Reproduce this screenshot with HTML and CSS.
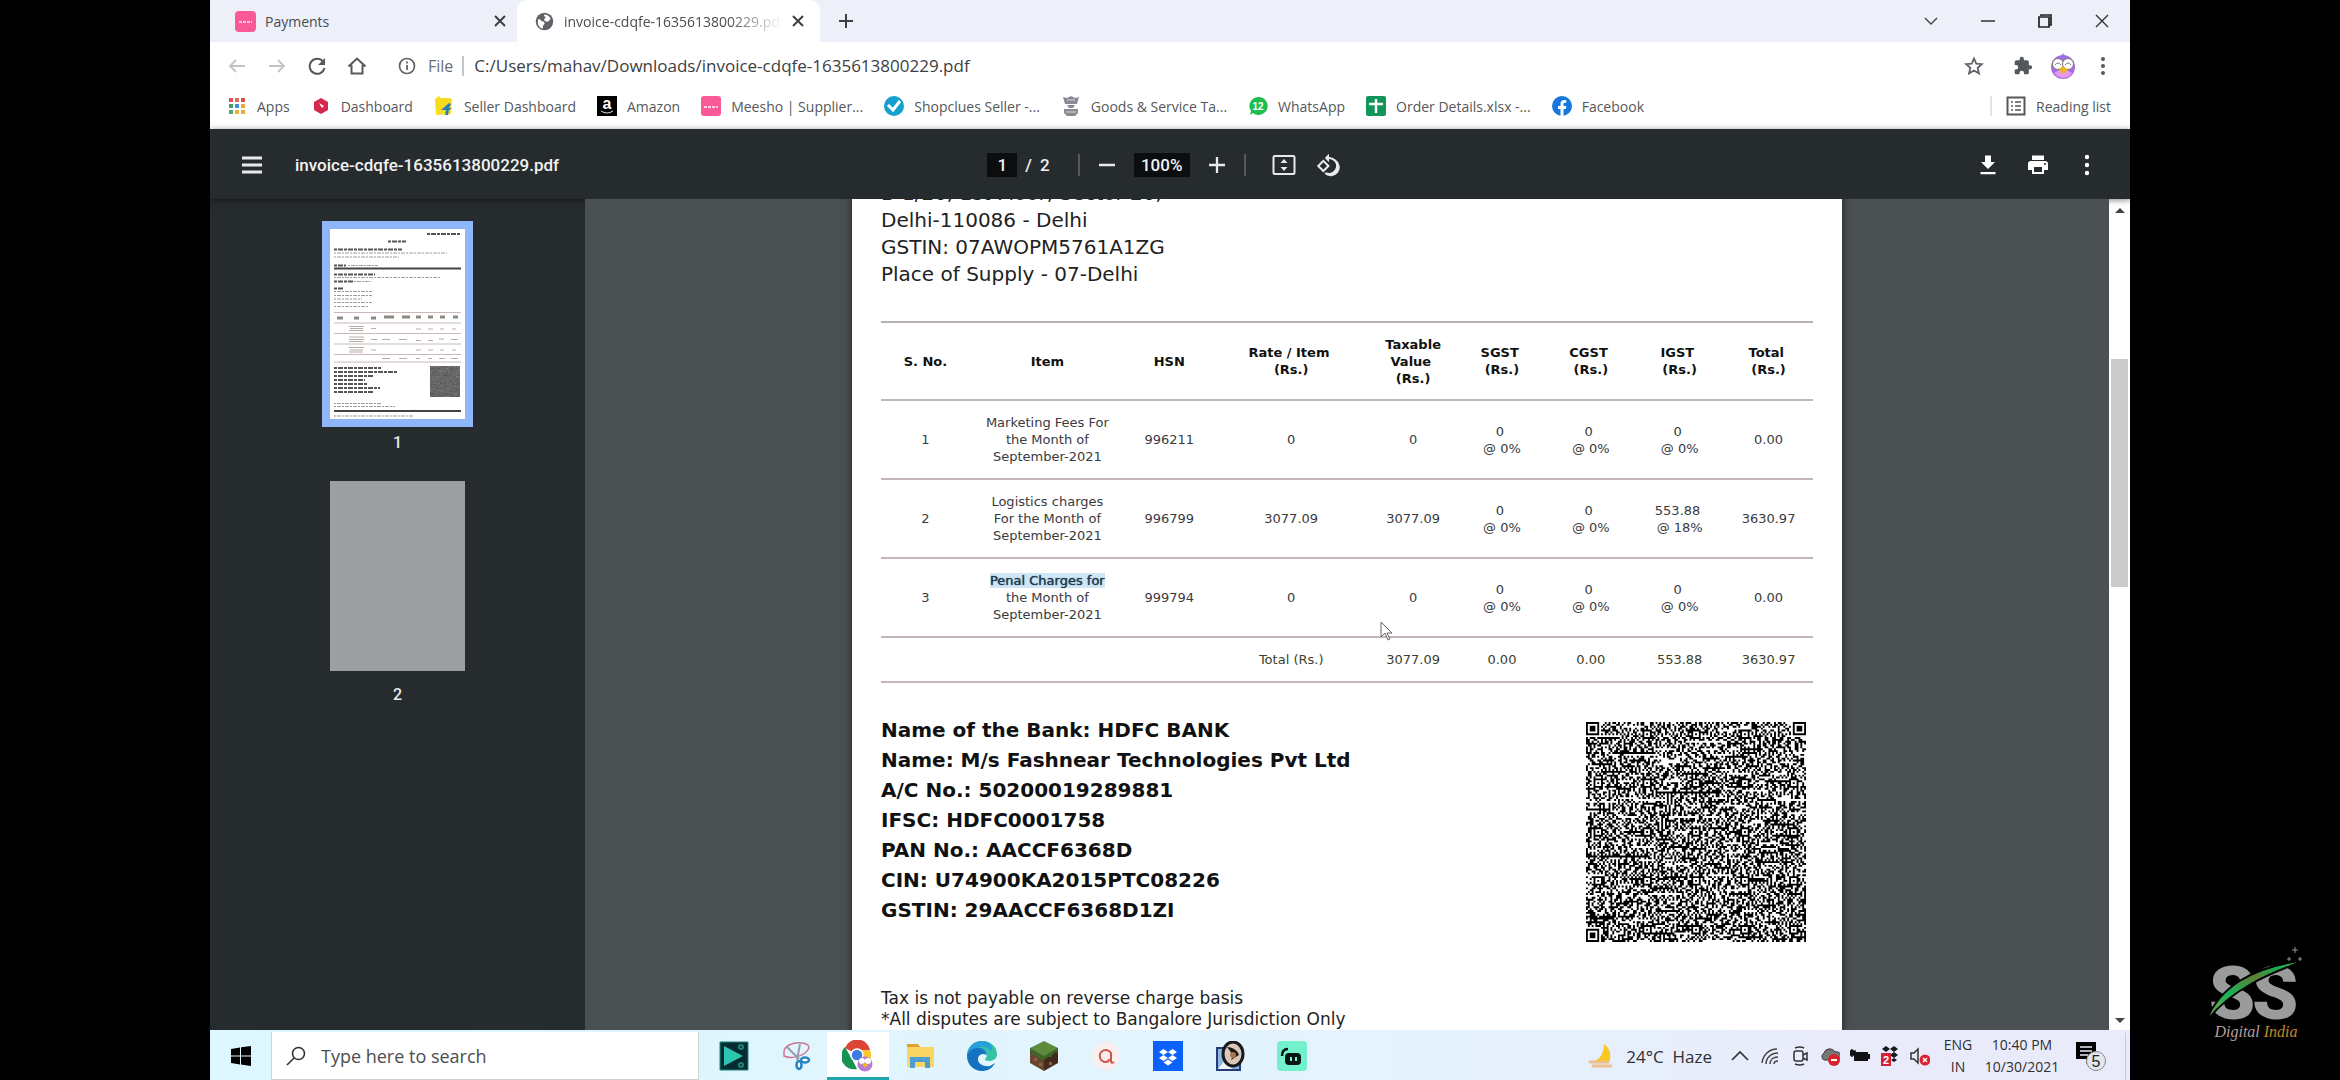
FILE: index.html
```html
<!DOCTYPE html>
<html lang="en">
<head>
<meta charset="utf-8">
<title>invoice-cdqfe-1635613800229.pdf</title>
<link rel="stylesheet" href="styles.css">
</head>
<body>
<div class="stage">
<div class="screen">

  <header class="tabstrip">
    <div class="tab">
      <svg class="i21" viewBox="0 0 21 21"><rect width="21" height="21" rx="4" fill="#f95a97"/><path d="M4 11h13" stroke="#ffc4dc" stroke-width="2" stroke-dasharray="3 1"/></svg>
      <a class="tab-title" href="#">Payments</a>
      <button class="plain" aria-label="Close tab"><svg class="i12" viewBox="0 0 12 12"><path d="M1 1l10 10M11 1L1 11" stroke="#3c4043" stroke-width="2"/></svg></button>
    </div>
    <div class="tab active">
      <svg class="i21" viewBox="0 0 24 24"><circle cx="12" cy="12" r="10" fill="#5f6368"/><path d="M5 9c3 0 3 3 5 3s3 2 1 4 0 3-1 4C6 19 3 15 5 9zM12 4c3 0 6 2 7 5-2 1-2 4-5 3s-3-3-1-4-3-2-1-4z" fill="#fff"/></svg>
      <a class="tab-title fade" href="#">invoice-cdqfe-1635613800229.pdf</a>
      <button class="plain" aria-label="Close tab"><svg class="i12" viewBox="0 0 12 12"><path d="M1 1l10 10M11 1L1 11" stroke="#3c4043" stroke-width="2"/></svg></button>
    </div>
    <button class="plain newtab" aria-label="New tab"><svg class="i16" viewBox="0 0 16 16"><path d="M8 1v14M1 8h14" stroke="#3c4043" stroke-width="2"/></svg></button>
    <div class="winctl">
      <button class="plain" aria-label="Search tabs"><svg class="i16" viewBox="0 0 16 16"><path d="M2 5l6 6 6-6" fill="none" stroke="#444" stroke-width="1.4"/></svg></button>
      <button class="plain" aria-label="Minimize"><svg class="i16" viewBox="0 0 16 16"><path d="M1 8h14" stroke="#333" stroke-width="1.5"/></svg></button>
      <button class="plain" aria-label="Restore"><svg class="i16" viewBox="0 0 16 16"><path d="M2 4h10v10H2zM4 3V2h10v10h-2" fill="none" stroke="#222" stroke-width="1.7"/></svg></button>
      <button class="plain" aria-label="Close"><svg class="i16" viewBox="0 0 16 16"><path d="M2 2l12 12M14 2L2 14" stroke="#333" stroke-width="1.4"/></svg></button>
    </div>
  </header>

  <nav class="navbar">
    <button class="plain" aria-label="Back"><svg class="i20" viewBox="0 0 20 20"><path d="M18 10H3M9 4l-6 6 6 6" fill="none" stroke="#c0c3c7" stroke-width="1.8"/></svg></button>
    <button class="plain" aria-label="Forward"><svg class="i20" viewBox="0 0 20 20"><path d="M2 10h15M11 4l6 6-6 6" fill="none" stroke="#c0c3c7" stroke-width="1.8"/></svg></button>
    <button class="plain" aria-label="Reload"><svg class="i20" viewBox="0 0 20 20"><path d="M16 5.500A7.500 7.500 0 1 0 17.500 12" fill="none" stroke="#555a5e" stroke-width="2"/><path d="M18 2v7h-7z" fill="#555a5e"/></svg></button>
    <button class="plain" aria-label="Home"><svg class="i20" viewBox="0 0 20 20"><path d="M1.500 10.500L10 2.500l8.500 8M4.500 9v8.500h11V9" fill="none" stroke="#555a5e" stroke-width="2"/></svg></button>
    <div class="omnibox">
      <svg class="i18" viewBox="0 0 18 18"><circle cx="9" cy="9" r="7.500" fill="none" stroke="#5f6368" stroke-width="1.700"/><path d="M9 8v5M9 4.500v2" stroke="#5f6368" stroke-width="1.800"/></svg>
      <label for="url">File</label>
      <input id="url" type="text" value="C:/Users/mahav/Downloads/invoice-cdqfe-1635613800229.pdf">
      <button class="plain" aria-label="Bookmark this page"><svg class="i20" viewBox="0 0 24 24"><path d="M12 3l2.700 6.200 6.800.6-5.100 4.500 1.500 6.600L12 17.400 6.100 20.900l1.500-6.600L2.500 9.800l6.800-.6z" fill="none" stroke="#5f6368" stroke-width="2.200"/></svg></button>
    </div>
    <div class="nav-right">
      <button class="plain" aria-label="Extensions"><svg class="i20" viewBox="0 0 24 24"><path d="M20.500 11H19V7a2 2 0 0 0-2-2h-4V3.500a2.500 2.500 0 0 0-5 0V5H4a2 2 0 0 0-2 2v3.800h1.500a2.700 2.700 0 0 1 0 5.400H2V20a2 2 0 0 0 2 2h3.800v-1.500a2.700 2.700 0 0 1 5.400 0V22H17a2 2 0 0 0 2-2v-4h1.500a2.500 2.500 0 0 0 0-5z" fill="#54585c"/></svg></button>
      <button class="plain" aria-label="Profile"><svg class="i26" viewBox="0 0 26 26"><path d="M10 4l3-4 3 4z" fill="#b79ac9"/><circle cx="13" cy="14" r="12" fill="#a56ce0"/><path d="M4 20c4 6 14 7 18 0l-9-5z" fill="#e59af0"/><circle cx="8" cy="11" r="5.500" fill="#fff" stroke="#777"/><circle cx="18" cy="11" r="5.500" fill="#fff" stroke="#777"/><path d="M5 12q3-4 6 0M15 12q3-4 6 0" fill="none" stroke="#777"/><path d="M9 16l4-3 5 4-5 4z" fill="#f1b51c"/></svg></button>
      <button class="plain" aria-label="Menu"><svg class="i20" viewBox="0 0 20 20" fill="#555a5e"><circle cx="10" cy="3" r="2"/><circle cx="10" cy="10" r="2"/><circle cx="10" cy="17" r="2"/></svg></button>
    </div>
  </nav>

  <nav class="bookmarks">
    <a href="#"><svg class="i20" viewBox="0 0 20 20"><g><path d="M2 2h4v4H2z" fill="#d9534f"/><path d="M8 2h4v4H8z" fill="#dd6f5a"/><path d="M14 2h4v4h-4z" fill="#d94f43"/><path d="M2 8h4v4H2z" fill="#43a35e"/><path d="M8 8h4v4H8z" fill="#3f8fe0"/><path d="M14 8h4v4h-4z" fill="#e7a73a"/><path d="M2 14h4v4H2z" fill="#55a867"/><path d="M8 14h4v4H8z" fill="#e7b23a"/><path d="M14 14h4v4h-4z" fill="#eea93c"/></g></svg>Apps</a>
    <a href="#"><svg class="i20" viewBox="0 0 20 20"><path d="M10 2l7 4v8l-7 4-7-4V6z" fill="#d5274b"/><path d="M8 7l5 3-2 2z" fill="#fff"/></svg>Dashboard</a>
    <a href="#"><svg class="i20" viewBox="0 0 20 20"><path d="M1 3l4-3 2 2h8l3 1-1 15-15 1z" fill="#f7dc1f"/><path d="M11 19l1-5H7l8-7 2 1-2 4h3l-3 2-1 5z" fill="#2c7cb8"/></svg>Seller Dashboard</a>
    <a href="#"><svg class="i20" viewBox="0 0 20 20"><path d="M0 0h20v20H0z" fill="#000"/><text x="10" y="13" text-anchor="middle" class="glyph" font-size="16" fill="#fff">a</text><path d="M4 15q6 4 12 0" fill="none" stroke="#ddd"/></svg>Amazon</a>
    <a href="#"><svg class="i20" viewBox="0 0 20 20"><rect width="20" height="20" rx="3" fill="#f95a97"/><path d="M3 11h14" stroke="#ffd0e2" stroke-width="2" stroke-dasharray="3 1"/></svg>Meesho | Supplier...</a>
    <a href="#"><svg class="i20" viewBox="0 0 20 20"><circle cx="10" cy="10" r="10" fill="#16a0cf"/><path d="M4 9l5 5 7-9" fill="none" stroke="#fff" stroke-width="3"/></svg>Shopclues Seller -...</a>
    <a href="#"><svg class="i20" viewBox="0 0 20 20" fill="#8d8892"><path d="M2 1l4 1 4-2 4 2 4-1-2 7H4zM6 9h8l-2 3H8zM3 13h14v4l-3 3H6l-3-3z"/><path d="M6 4h8M5 16h10" stroke="#d8d4dc"/></svg>Goods &amp; Service Ta...</a>
    <a href="#"><svg class="i20" viewBox="0 0 20 20"><path d="M10 1a9 9 0 1 1-5 16l-3 2 1-4A9 9 0 0 1 10 1z" fill="#1fbd4e"/><text x="10" y="14" text-anchor="middle" class="glyph" font-size="10" fill="#fff">12</text></svg>WhatsApp</a>
    <a href="#"><svg class="i20" viewBox="0 0 20 20"><rect width="20" height="20" rx="2" fill="#12955a"/><path d="M10 3v14M3 8h14" stroke="#fff" stroke-width="2.400"/></svg>Order Details.xlsx -...</a>
    <a href="#"><svg class="i20" viewBox="0 0 20 20"><circle cx="10" cy="10" r="10" fill="#1877dc"/><path d="M8.500 20v-7H6v-3h2.500V8c0-2.600 1.500-4 3.800-4l2 .2v2.500h-1.200C12 6.700 11.500 7.400 11.500 8v2h2.800l-.5 3h-2.300v7z" fill="#fff"/></svg>Facebook</a>
    <a href="#" class="reading"><svg class="i20" viewBox="0 0 20 20"><path d="M1.500 1.500h17v17h-17z" fill="none" stroke="#54585c" stroke-width="2"/><path d="M5 6h2M9 6h6M5 10h2M9 10h6M5 14h2M9 14h6" stroke="#54585c" stroke-width="1.600"/></svg>Reading list</a>
  </nav>

  <div class="pdfbar">
    <div class="pdf-left">
      <button class="plain" aria-label="Toggle sidebar"><svg class="i22" viewBox="0 0 22 22"><path d="M1 4h20M1 11h20M1 18h20" stroke="#e8eaed" stroke-width="3"/></svg></button>
      <span class="pdf-title">invoice-cdqfe-1635613800229.pdf</span>
    </div>
    <div class="pdf-mid">
      <span class="pager"><input class="field pageno" type="text" value="1" aria-label="Page"><span>/</span><span>2</span></span>
      <i class="sep"></i>
      <button class="plain" aria-label="Zoom out"><svg class="i22" viewBox="0 0 22 22"><path d="M3 11h16" stroke="#e8eaed" stroke-width="2.500"/></svg></button>
      <input class="field zoom" type="text" value="100%" aria-label="Zoom level">
      <button class="plain" aria-label="Zoom in"><svg class="i22" viewBox="0 0 22 22"><path d="M3 11h16M11 3v16" stroke="#e8eaed" stroke-width="2.300"/></svg></button>
      <i class="sep"></i>
      <div class="fit">
        <button class="plain" aria-label="Fit to page"><svg class="i24" viewBox="0 0 24 24"><rect x="1.500" y="3" width="21" height="18" rx="1.500" fill="none" stroke="#e8eaed" stroke-width="2"/><path d="M12 6l3.500 4h-7zM12 18l-3.500-4h7z" fill="#e8eaed"/></svg></button>
        <button class="plain" aria-label="Rotate"><svg class="i24" viewBox="0 0 24 24"><path d="M7.300 6.400L.9 12.900l6.500 6.500 6.500-6.500zM3.700 12.900l3.700-3.700 3.600 3.700-3.600 3.700zM19.400 6.600A9 9 0 0 0 13 4V.8L8.800 5 13 9.200V6a7 7 0 1 1-3 13.300L8.500 20.800A9 9 0 1 0 19.400 6.600z" fill="#e8eaed"/></svg></button>
      </div>
    </div>
    <div class="pdf-right">
      <button class="plain" aria-label="Download"><svg class="i24" viewBox="0 0 24 24"><path d="M19 9h-4V2.500H9V9H5l7 7zM4.500 19v2.300h15V19z" fill="#fff"/></svg></button>
      <button class="plain" aria-label="Print"><svg class="i24" viewBox="0 0 24 24"><path d="M19 8H5a3 3 0 0 0-3 3v6h4v4h12v-4h4v-6a3 3 0 0 0-3-3zm-3 11H8v-5h8zm3-7a1 1 0 1 1 0-2 1 1 0 0 1 0 2zM18 2.500H6V7h12z" fill="#fff"/></svg></button>
      <button class="plain" aria-label="More"><svg class="i22" viewBox="0 0 22 22" fill="#fff"><circle cx="11" cy="3" r="2.200"/><circle cx="11" cy="11" r="2.200"/><circle cx="11" cy="19" r="2.200"/></svg></button>
    </div>
  </div>

  <div class="viewer">
    <aside class="thumbs">
      <button class="thumb current" aria-label="Page 1">
        <svg class="mini" viewBox="0 0 135 190">
          <path d="M0 0h135v190H0z" fill="#fff"/>
          <g stroke="#555" stroke-width="2" stroke-dasharray="3 1 5 1"><path d="M97 5h34M58 12.500h18M4 20.500h68M4 36.500h12M4 45.500h41M4 52.500h20M4 59.500h9M4 139h47M4 143h63M4 147h39M4 151h31M4 155h34M4 159h46M4 163h40"/></g>
          <g stroke="#9a9a9a" stroke-width="1" stroke-dasharray="2 1 4 1"><path d="M4 24h113M4 28h65M18 36.500h30M4 48.500h106M24 52.500h17M4 62.500h38M4 66.500h38M4 70h28M4 73.500h38M4 77.500h35M4 174.500h48M4 177.500h61M4 187h80"/></g>
          <path d="M4 39.500h127M4 182h127" stroke="#444" stroke-width="2"/>
          <path d="M4 83.500h127M4 94h127M4 104.500h127M4 115h127M4 125.500h127M4 133h127" stroke="#c9bab7"/>
          <path d="M7 89h6M24 89h5M41 89h5M54 88h10M72 88h8M86 88h5M98 88h5M110 88h5M123 88h5" stroke="#8a8a85" stroke-width="3"/>
          <g stroke="#b9aca8" stroke-width="1"><path d="M19 97.500h15M20 99.500h13M19 101.500h14M19 108h15M19 110.500h15M19 112.500h14M19 118.500h15M20 121h13M19 123h14M41 99.500h5M41 110.500h6M41 121h5M52 110.500h8M69 110.500h8M86 100h5M98 100h5M110 100h4M122 100h4M86 111.500h5M98 111.500h5M109 110h5M121 110.500h7M86 121h5M98 121h5M110 121h4M122 121h4M52 129.500h8M69 129.500h8M86 129.500h4M98 129.500h4M109 129.500h6M121 129.500h7"/></g>
          <svg x="100" y="137" width="30" height="31" viewBox="0 0 117 117" preserveAspectRatio="none"><path d="M0 0h117v117H0z" fill="#8a8a8a"/><use href="#qr-modules" fill="#444"/></svg>
        </svg>
      </button>
      <span class="thumb-no">1</span>
      <button class="thumb" aria-label="Page 2"><span class="mini blank"></span></button>
      <span class="thumb-no">2</span>
    </aside>

    <main class="canvas">
      <article class="page">
        <address class="billto">B-1/20, 1st Floor, Sector 20,<br>Delhi-110086 - Delhi<br>GSTIN: 07AWOPM5761A1ZG<br>Place of Supply - 07-Delhi</address>
        <table class="items">
          <colgroup><col class="n"><col class="w"><col class="n"><col class="w"><col class="n"><col class="n"><col class="n"><col class="n"><col class="n"></colgroup>
          <thead><tr><th>S. No.</th><th>Item</th><th>HSN</th><th>Rate / Item&nbsp;<br>(Rs.)</th><th>Taxable<br>Value&nbsp;<br>(Rs.)</th><th>SGST&nbsp;<br>(Rs.)</th><th>CGST&nbsp;<br>(Rs.)</th><th>IGST&nbsp;<br>(Rs.)</th><th>Total&nbsp;<br>(Rs.)</th></tr></thead>
          <tbody>
            <tr><td>1</td><td>Marketing Fees For<br>the Month of<br>September-2021</td><td>996211</td><td>0</td><td>0</td><td>0&nbsp;<br>@ 0%</td><td>0&nbsp;<br>@ 0%</td><td>0&nbsp;<br>@ 0%</td><td>0.00</td></tr>
            <tr><td>2</td><td>Logistics charges<br>For the Month of<br>September-2021</td><td>996799</td><td>3077.09</td><td>3077.09</td><td>0&nbsp;<br>@ 0%</td><td>0&nbsp;<br>@ 0%</td><td>553.88&nbsp;<br>@ 18%</td><td>3630.97</td></tr>
            <tr><td>3</td><td><mark>Penal Charges for</mark><br>the Month of<br>September-2021</td><td>999794</td><td>0</td><td>0</td><td>0&nbsp;<br>@ 0%</td><td>0&nbsp;<br>@ 0%</td><td>0&nbsp;<br>@ 0%</td><td>0.00</td></tr>
          </tbody>
          <tfoot><tr><td></td><td></td><td></td><td>Total (Rs.)</td><td>3077.09</td><td>0.00</td><td>0.00</td><td>553.88</td><td>3630.97</td></tr></tfoot>
        </table>
        <div class="bankrow">
          <div class="bank">Name of the Bank: HDFC BANK<br>Name: M/s Fashnear Technologies Pvt Ltd<br>A/C No.: 50200019289881<br>IFSC: HDFC0001758<br>PAN No.: AACCF6368D<br>CIN: U74900KA2015PTC08226<br>GSTIN: 29AACCF6368D1ZI</div>
          <svg class="qr" viewBox="0 0 117 117" role="img" aria-label="Signed invoice QR code"><path id="qr-modules" d=""/></svg>
        </div>
        <p class="terms">Tax is not payable on reverse charge basis<br>*All disputes are subject to Bangalore Jurisdiction Only</p>
      </article>
      <svg class="cursor" viewBox="0 0 13 20"><path d="M1 1v15l4-4 3 7 2-1-3-6h5z" fill="#fff" stroke="#666"/></svg>
    </main>
    <div class="scrollbar"><i class="up"></i><i class="bar"></i><i class="down"></i></div>
  </div>

  <footer class="taskbar">
    <button class="plain start" aria-label="Start"><svg class="i20" viewBox="0 0 20 20"><path d="M0 3l9-1.500V9.500H0zM10 1.300L20 0v9.500H10zM0 10.500h9v8L0 17zM10 10.500h10V20l-10-1.400z" fill="#000"/></svg></button>
    <div class="search"><svg class="i20" viewBox="0 0 20 20"><circle cx="12.500" cy="7.500" r="6" fill="none" stroke="#333" stroke-width="1.600"/><path d="M8 12l-7 7" stroke="#333" stroke-width="1.600"/></svg><input type="text" aria-label="Search" placeholder="Type here to search"></div>
    <div class="apps">
      <button class="app" aria-label="Filmora"><svg class="i30" viewBox="0 0 30 30"><path d="M1 1h28v28H1z" fill="#062b30" stroke="#15897f"/><path d="M5 5l19 10L5 25z" fill="#2bc5b0"/><g fill="none" stroke="#15897f" stroke-width="2"><circle cx="22" cy="6" r="2"/><circle cx="22" cy="24" r="2"/></g></svg></button>
      <button class="app" aria-label="Snip"><svg class="i30" viewBox="0 0 30 30"><g fill="none" stroke-width="1.500"><path d="M3 12C2 5 12 1 21 2s8 6 3 10-15 6-21 3z" stroke="#c97993"/><path d="M6 6l12 12M19 3l-3 16" stroke="#9a9cab" stroke-width="2"/></g><g fill="#fff" stroke="#2584c6" stroke-width="2.500"><ellipse cx="18" cy="24" rx="2.500" ry="4"/><ellipse cx="24" cy="19" rx="4" ry="2.500"/></g></svg></button>
      <button class="app open" aria-label="Chrome"><svg class="i32" viewBox="0 0 32 32"><path d="M15 14L3 8a13 13 0 0 1 25 2z" fill="#dc4437"/><path d="M3 7l8 14 4 8A13 13 0 0 1 3 7z" fill="#18934f"/><path d="M15 10h13a13 13 0 0 1-9 18l-4-1 5-12z" fill="#fbc62e"/><circle cx="15" cy="15" r="6" fill="#3b7de0" stroke="#fff" stroke-width="1.500"/><circle cx="23" cy="24" r="7.500" fill="#b57bd6"/><circle cx="20" cy="21" r="3" fill="#fff"/><circle cx="26" cy="21" r="3" fill="#fff"/><path d="M20 24l3-1 3 2-3 3z" fill="#f1b51c"/></svg></button>
      <button class="app" aria-label="File Explorer"><svg class="i30" viewBox="0 0 30 30"><path d="M2 3h11l3 4H2z" fill="#e0a12b"/><path d="M2 6h27v20H2z" fill="#fbd562"/><path d="M5 27V16h20v11h-5v-6h-10v6z" fill="#4e9ed3"/></svg></button>
      <button class="app" aria-label="Edge"><svg class="i30" viewBox="0 0 30 30"><path d="M15 0c9 0 15 6 15 13 0 5-4 7-8 7-3 0-4-1-4-2l2-3c0-4-4-7-9-6-6 0-10 4-11 6C0 6 7 0 15 0z" fill="#34c3a4"/><path d="M15 0C7 0 0 6 0 15l9-3c4-3 11-2 11 3 0-6-3-9-9-8 4-3 10-1 13 3C27 5 22 0 15 0z" fill="#279fd8"/><path d="M0 15c1-5 6-8 11-8 4 0 8 3 9 8-1-3-8-3-9 2-1 6 6 9 12 8l5-3c-3 6-8 8-13 8C6 30 0 23 0 15z" fill="#1571c2"/></svg></button>
      <button class="app" aria-label="Minecraft"><svg class="i30" viewBox="0 0 30 30"><path d="M15 0l14 7-14 8L1 7z" fill="#5d8a3b"/><path d="M1 7l14 8v15L1 22z" fill="#6a452f"/><path d="M29 7l-14 8v15l14-8z" fill="#46291d"/><path d="M1 7l14 8v4l-4-1-3-3-4-1-3-4zM29 7l-14 8v4l4-3 3 0 3-4 4-1z" fill="#3d6727"/><path d="M5 17h3v3H5zM10 22h3v3h-3zM20 21h3v3h-3z" fill="#8a6247"/></svg></button>
      <button class="app" aria-label="Recorder"><svg class="i30" viewBox="0 0 30 30"><circle cx="15" cy="15" r="14" fill="#fbeeee"/><path d="M20 21V12a6 6 0 1 0-5 9c2 0 3-1 3-3" fill="none" stroke="#d0564a" stroke-width="2"/><path d="M20 20q0 3 3 1" fill="none" stroke="#d0564a" stroke-width="2"/></svg></button>
      <button class="app" aria-label="Dropbox"><svg class="i30" viewBox="0 0 30 30"><path d="M0 0h30v30H0z" fill="#0a62fb"/><path d="M10.500 8l4.500 3-4.500 3L6 11zM19.500 8l4.500 3-4.500 3-4.500-3zM10.500 14l4.500 3-4.500 3L6 17zM19.500 14l4.500 3-4.500 3-4.500-3zM15 18.500l4.500 3-4.500 3-4.500-3z" fill="#fff"/></svg></button>
      <button class="app" aria-label="Viewer"><svg class="i30" viewBox="0 0 30 30"><path d="M2 7h23v22H2z" fill="#8fb7e6" stroke="#253d77" stroke-width="2"/><path d="M3 28l8-10 6 10z" fill="#eef3f9"/><ellipse cx="18" cy="13" rx="10" ry="12" fill="#d9c7b8" stroke="#1a1a1c" stroke-width="3"/><path d="M12 6c6 0 11 4 12 8l-8 5c3-5-1-9-4-13z" fill="#1c1a1c"/><circle cx="18" cy="14" r="3" fill="#b0754c"/></svg></button>
      <button class="app" aria-label="Phone link"><svg class="i30" viewBox="0 0 30 30"><rect width="30" height="30" rx="4" fill="#73f0cc"/><rect x="8" y="12" width="16" height="12" rx="4" fill="#071512"/><path d="M5 15c0-5 2-7 6-7" fill="none" stroke="#071512" stroke-width="2.500"/><path d="M14 16v4M19 16v4" stroke="#73f0cc" stroke-width="2"/></svg></button>
    </div>
    <div class="weather"><svg class="i28" viewBox="0 0 28 28"><path d="M17 2c6 4 8 12 5 18H5c8-2 12-9 12-18z" fill="#f9c821"/><path d="M3 20h18M6 24h18" stroke="#ecc08a" stroke-width="3" stroke-linecap="round"/></svg><span>24°C&nbsp; Haze</span></div>
    <div class="tray">
      <button class="plain" aria-label="Show hidden icons"><svg class="i20" viewBox="0 0 20 20"><path d="M2 14l8-8 8 8" fill="none" stroke="#333" stroke-width="1.700"/></svg></button>
      <button class="plain" aria-label="Network"><svg class="i20" viewBox="0 0 20 20"><g fill="none" stroke="#444" stroke-width="1.500"><path d="M2 17C3 9 9 3 17 3M6 18c0-6 5-11 12-11M10 18c0-4 3-7 8-7M14 18c0-2 2-3 4-3"/></g></svg></button>
      <button class="plain" aria-label="Meet now"><svg class="i20" viewBox="0 0 20 20"><g fill="none" stroke="#333" stroke-width="1.500"><rect x="4" y="5" width="9" height="10" rx="2"/><path d="M13 9l4-2v7l-4-2M5 2q5-2 9 0M5 18q5 2 9 0"/></g></svg></button>
      <button class="plain" aria-label="Cloud sync"><svg class="i20" viewBox="0 0 20 20"><path d="M4 14a4 4 0 0 1 0-7 6 6 0 0 1 11-1 4 4 0 0 1 3 8z" fill="#777" stroke="#333"/><circle cx="14" cy="14" r="6" fill="#d9222e"/><path d="M11 14h6" stroke="#fff" stroke-width="2"/></svg></button>
      <button class="plain" aria-label="Battery"><svg class="i20" viewBox="0 0 20 20"><path d="M4 6h14v2h2v5h-2v2H4z" fill="#111"/><path d="M0 5h5v4H0zM2 3v8" fill="#111" stroke="#111" stroke-width="1.500"/></svg></button>
      <button class="plain" aria-label="Dropbox"><svg class="i20" viewBox="0 0 20 20"><path d="M6 0l4 3-4 3-4-3zM14 0l4 3-4 3-4-3zM14 6l4 3-4 3-4-3zM14 12l3 2-3 2-3-2z" fill="#17171f"/><path d="M1 7h10v13H1z" fill="#d3203a"/><text x="6" y="18" text-anchor="middle" class="glyph" font-size="11" fill="#fff">2</text></svg></button>
      <button class="plain" aria-label="Volume"><svg class="i20" viewBox="0 0 20 20"><path d="M1 7h3l4-4v14l-4-4H1z" fill="none" stroke="#333" stroke-width="1.500"/><circle cx="15" cy="14" r="5.500" fill="#d9222e"/><path d="M13 12l4 4M17 12l-4 4" stroke="#fff" stroke-width="1.500"/></svg></button>
    </div>
    <div class="stack lang">ENG<br>IN</div>
    <div class="stack clock">10:40 PM<br>10/30/2021</div>
    <button class="plain notif" aria-label="Notifications"><svg class="i34" viewBox="0 0 34 34"><path d="M2 3h20v17h-6l-4 5v-5H2z" fill="#000"/><path d="M6 8h12M6 12h12M6 16h8" stroke="#e9ebfb" stroke-width="1.500"/><circle cx="22" cy="22" r="9.500" fill="#e4e6ee" stroke="#888"/><text x="22" y="28" text-anchor="middle" class="glyph count" font-size="16" fill="#222">5</text></svg></button>
  </footer>
</div>

<aside class="brand">
  <svg class="mark" viewBox="0 0 104 78">
    <defs><linearGradient id="sw" x1="0" y1="1" x2="1" y2="0"><stop offset="0" stop-color="#8a9a55"/><stop offset=".35" stop-color="#17b255"/><stop offset=".6" stop-color="#5e7f36"/><stop offset=".8" stop-color="#12b04e"/><stop offset="1" stop-color="#6c9a55"/></linearGradient></defs>
    <g class="initials" fill="#9a9c9b"><text x="5" y="75">S</text><text x="48" y="75">S</text></g>
    <path d="M2 78C14 44 48 22 103 16 62 30 24 48 2 78z" fill="url(#sw)" stroke="#000" stroke-width="2"/>
    <path d="M91 3v6M88 6h6M85 13v4M83 15h4M96 13v4M94 15h4" stroke="#8a9a94"/>
  </svg>
  <div class="tagline"><span>Digital</span> <b>India</b></div>
</aside>
</div>
<script src="qr.js"></script>
</body>
</html>
```
FILE: styles.css
```css
* { box-sizing: border-box; }
body { margin: 0; background: #000; font-family: "Open Sans", "Noto Sans", sans-serif; color: #4a4d50; }
svg { display: block; flex: none; }
a { color: inherit; text-decoration: none; }
input { border: 0; padding: 0; outline: 0; font: inherit; color: inherit; background: none; min-width: 0; }
.plain { border: 0; padding: 0; background: none; display: flex; align-items: center; justify-content: center; flex: none; }
.i12 { width: 12px; height: 12px; }
.i16 { width: 16px; height: 16px; }
.i18 { width: 18px; height: 18px; }
.i20 { width: 20px; height: 20px; }
.i21 { width: 21px; height: 21px; }
.i22 { width: 22px; height: 22px; }
.i24 { width: 24px; height: 24px; }
.i26 { width: 26px; height: 26px; }
.i28 { width: 28px; height: 28px; }
.i30 { width: 30px; height: 30px; }
.i32 { width: 32px; height: 32px; }
.i34 { width: 34px; height: 34px; }
.glyph { font-family: "Liberation Sans", sans-serif; font-weight: 700; }
.count { font-weight: 400; }

.stage { display: grid; grid-template-columns: 1fr 210px; padding-left: 210px; height: 100vh; overflow: hidden; }
.screen { display: flex; flex-direction: column; min-width: 0; min-height: 0; background: #fff; }

/* tab strip */
.tabstrip { display: flex; align-items: center; height: 42px; flex: none; background: #edeff9; font-size: 14px; }
.tab { display: flex; align-items: center; gap: 9px; width: 307px; height: 42px; padding: 0 11px 0 25px; }
.tab.active { width: 303px; padding: 0 16px 0 17px; background: #fff; border-radius: 10px 10px 0 0; }
.tab-title { flex: 1; min-width: 0; overflow: hidden; white-space: nowrap; }
.fade { mask-image: linear-gradient(90deg, #000 75%, transparent); }
.newtab { width: 52px; }
.winctl { display: flex; margin-left: auto; }
.winctl .plain { width: 57px; }

/* address row */
.navbar { display: flex; align-items: center; height: 47px; flex: none; padding: 0 17px; gap: 20px; }
.omnibox { flex: 1; display: flex; align-items: center; padding: 0 9px 0 11px; font-size: 17px; min-width: 0; }
.omnibox label { padding: 0 9px 0 12px; border-right: 2px solid #c4c6c9; line-height: 20px; font-size: 16px; color: #6b6f73; }
.omnibox input { flex: 1; padding-left: 10px; color: #3c4043; }
.nav-right { display: flex; align-items: center; gap: 17px; }

.bookmarks { display: flex; align-items: center; height: 40px; flex: none; padding: 0 19px 6px 17px; gap: 21px; font-size: 14px; white-space: nowrap; color: #55585b; }
.bookmarks a { display: flex; align-items: center; gap: 10px; }
.bookmarks .reading { margin-left: auto; padding-left: 14px; border-left: 2px solid #e4e4e6; }

/* pdf toolbar */
.pdfbar { display: grid; grid-template-columns: 1fr auto 1fr; align-items: center; height: 70px; flex: none; padding: 2px 32px 0 31px; background: #262b2e; color: #f1f3f4; font: 500 17px Roboto, sans-serif; position: relative; box-shadow: 0 1px 6px rgba(0,0,0,.5); }
.pdf-left { display: flex; align-items: center; gap: 32px; }
.pdf-mid { display: flex; align-items: center; gap: 16px; padding-right: 12px; }
.pager { display: flex; gap: 8px; align-items: center; margin-right: 12px; }
.field { height: 24px; background: #0b0d0e; text-align: center; }
.pageno { width: 30px; }
.zoom { width: 56px; }
.sep { width: 2px; height: 22px; background: #55595c; }
.fit { display: flex; gap: 20px; padding-left: 10px; }
.pdf-right { display: flex; justify-content: flex-end; gap: 26px; }

/* viewer */
.viewer { flex: 1; display: flex; min-height: 0; overflow: hidden; }
.thumbs { width: 375px; flex: none; display: flex; flex-direction: column; align-items: center; padding: 22px 0 0; background: #262b2d; color: #e8eaed; font: 500 16px/20px Roboto, sans-serif; }
.thumb { display: block; border: 8px solid transparent; padding: 0; background: none; }
.current { border-color: #8fb6fa; }
.thumbs .thumb-no { margin: 6px 0 20px; }
.mini { display: block; width: 135px; height: 190px; }
.blank { background: #9d9ea0; }
.canvas { flex: 1; position: relative; overflow: hidden; background: #4b5052; }
.page { width: 65%; max-width: 990px; height: 1400px; margin: 0 auto; padding: 0 29px; background: #fff; box-shadow: 0 0 8px rgba(0,0,0,.6); color: #222; font-family: "DejaVu Sans", sans-serif; }
.billto { display: block; margin-top: -19px; font-style: normal; font-size: 20px; line-height: 27px; }
.items { width: 100%; margin-top: 33px; border-collapse: collapse; table-layout: fixed; font-size: 13px; line-height: 17px; text-align: center; color: #3a3a3e; border-top: 2px solid #b9b1b0; }
.items .w { width: 155px; }
.items th, .items td { padding: 0; height: 78px; border-bottom: 2px solid #c2b6b8; }
.items th { color: #111; }
.items tbody td { height: 79px; }
.items tfoot td { height: 45px; color: #3c3f2c; }
mark { background: #cfe6f6; color: #20394f; text-shadow: 0 0 1px #20394f; }
.bankrow { display: flex; justify-content: space-between; align-items: flex-start; padding: 32px 7px 0 0; }
.bank { font-weight: 700; font-size: 20px; line-height: 30px; color: #111; }
.qr { width: 220px; height: 220px; margin-top: 7px; }
.terms { margin: 46px 0 0; font-size: 17px; line-height: 21px; }
.cursor { position: absolute; left: 795px; top: 422px; width: 13px; height: 20px; }
.scrollbar { width: 21px; flex: none; background: #fff; display: flex; flex-direction: column; align-items: center; padding: 9px 0 7px; }
.up { border: 5px solid transparent; border-top: 0; border-bottom: 5px solid #444; }
.bar { width: 17px; height: 28%; margin-top: 146px; background: #cbcbcb; }
.down { margin-top: auto; border: 5px solid transparent; border-bottom: 0; border-top: 5px solid #444; }

/* taskbar */
.taskbar { height: 50px; flex: none; display: flex; align-items: center; padding-top: 2px; position: relative; background: linear-gradient(90deg, #dcf7fe, #e4f3fd 60%, #e9ebfb 85%); color: #2e3033; }
.start { width: 61px; }
.search { display: flex; align-items: center; align-self: stretch; gap: 15px; width: 428px; padding-left: 14px; background: #fff; border: 1px solid #c8d4d8; border-width: 0 1px 1px; font-size: 18px; }
.search input { flex: 1; }
.search input::placeholder { color: #4b4d50; opacity: 1; }
.apps { display: flex; align-self: stretch; padding-left: 4px; }
.app { width: 62px; border: 0; padding: 0; background: none; display: flex; align-items: center; justify-content: center; }
.app.open { background: #fff; box-shadow: inset 0 -3px #1fa6ad; }
.weather { display: flex; align-items: center; gap: 11px; margin-left: auto; font-size: 17px; white-space: nowrap; }
.tray { display: flex; margin-left: 13px; }
.tray .plain { width: 30px; }
.stack { text-align: center; font-size: 14px; line-height: 22px; }
.lang { width: 40px; margin-left: 3px; }
.clock { width: 88px; }
.notif { width: 44px; padding-left: 6px; margin-right: 20px; }
.taskbar::after { content: ""; position: absolute; right: 4px; top: 3px; bottom: 0; width: 1px; background: #c5c8d8; }

/* channel branding */
.brand { align-self: end; justify-self: end; width: 104px; padding-bottom: 38px; margin-right: 32px; }
.mark { width: 104px; height: 78px; overflow: visible; }
.initials { font: 900 74px Roboto, sans-serif; }
.tagline { font: italic 16px "Liberation Serif", serif; line-height: 20px; text-align: center; color: #b39d9d; white-space: nowrap; }
.tagline b { color: #c08a22; font-weight: 400; }
```
FILE: qr.js
```js
(function () {
  var n = 117, centers = [6, 32, 58, 84, 110], seed = 25117, d = "";
  function rnd() {
    seed = (seed * 1103515245 + 12345) % 2147483648;
    return (seed >> 12) & 1;
  }
  function ring(dx, dy) { return Math.max(Math.abs(dx), Math.abs(dy)); }
  function dark(x, y) {
    var bit = rnd(), f = [[3, 3], [n - 4, 3], [3, n - 4]], i, j, r;
    for (i = 0; i < 3; i++) {
      r = ring(x - f[i][0], y - f[i][1]);
      if (r <= 4) return r <= 1 || r === 3;
    }
    for (i = 0; i < 5; i++) for (j = 0; j < 5; j++) {
      if ((i === 0 && (j === 0 || j === 4)) || (i === 4 && j === 0)) continue;
      r = ring(x - centers[i], y - centers[j]);
      if (r <= 2) return r !== 1;
    }
    if (x === 6 || y === 6) return (x + y) % 2 === 0;
    return bit === 1;
  }
  for (var y = 0; y < n; y++) for (var x = 0; x < n; x++) {
    if (dark(x, y)) d += "M" + x + " " + y + "h1v1h-1z";
  }
  document.getElementById("qr-modules").setAttribute("d", d);
})();
```
